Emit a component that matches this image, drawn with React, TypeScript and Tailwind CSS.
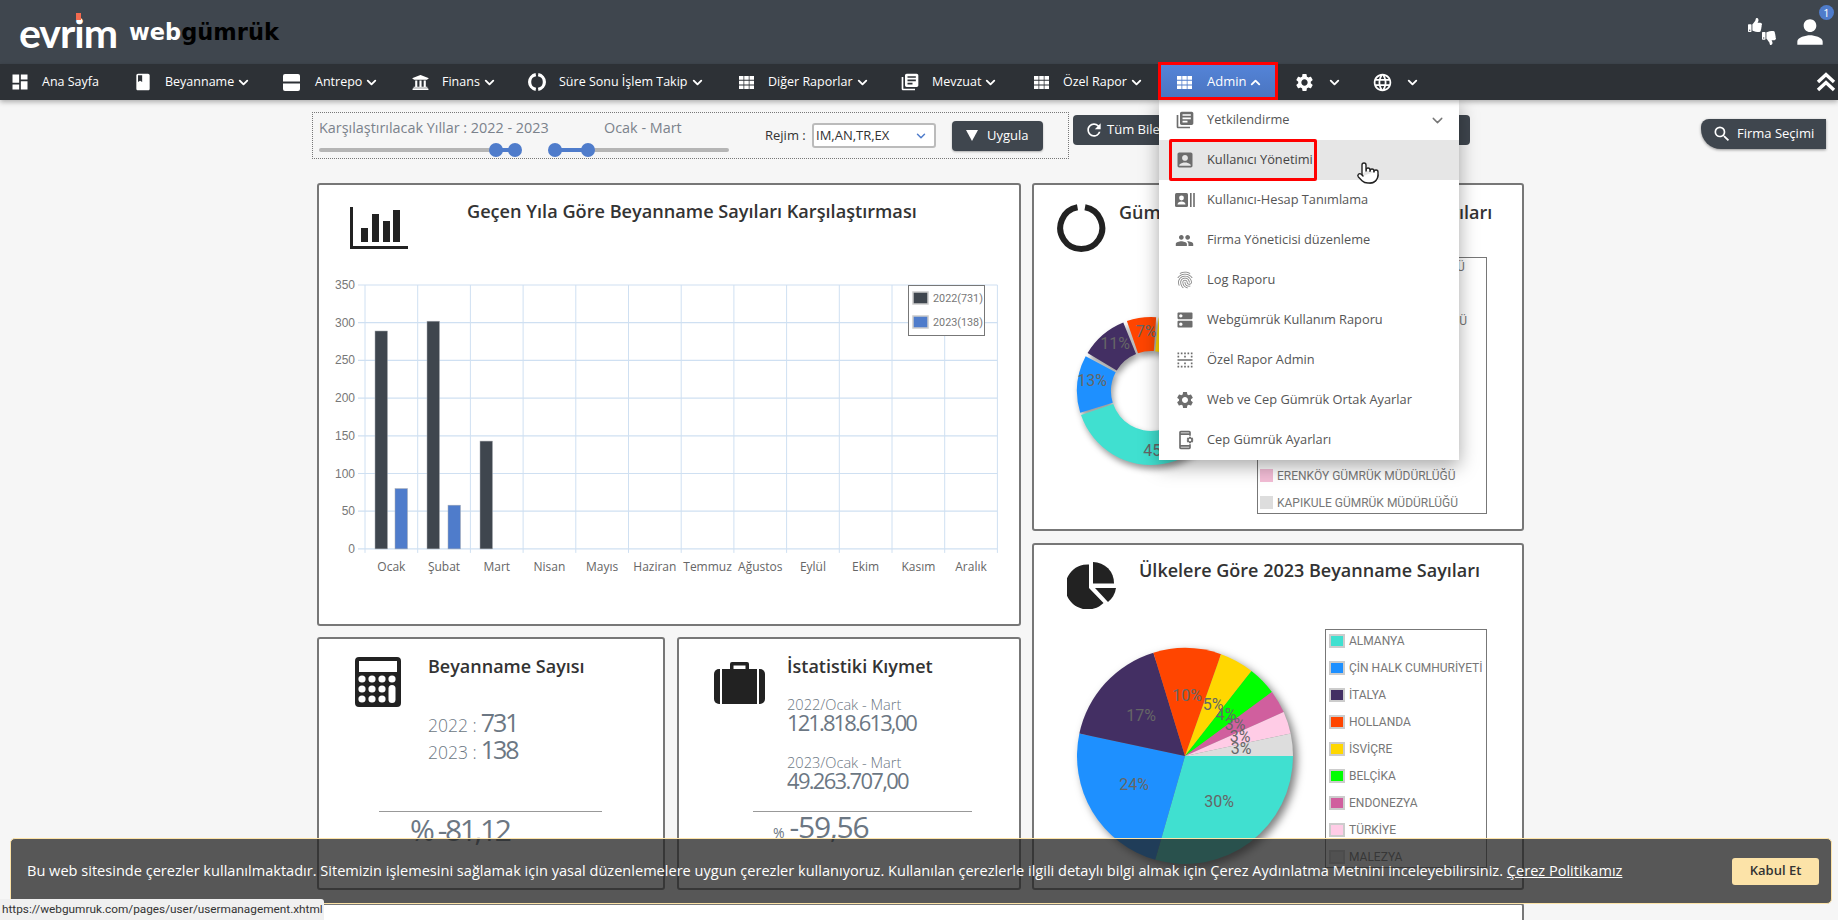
import { ChevronDown, ChevronUp, Pointer } from 'lucide-react'
import { FaThumbsDown, FaThumbsUp, FaUniversity } from 'react-icons/fa'
import {
  MdAccountBox,
  MdBook,
  MdBorderHorizontal,
  MdDashboard,
  MdDns,
  MdFingerprint,
  MdLanguage,
  MdLibraryBooks,
  MdOutlineAppSettingsAlt,
  MdPeople,
  MdPerson,
  MdRefresh,
  MdSearch,
  MdSettings,
} from 'react-icons/md'

function slicePath(cx: number, cy: number, r: number, r0: number, a0: number, a1: number) {
  const p = (rad: number, deg: number) => {
    const t = (deg * Math.PI) / 180
    return `${(cx + rad * Math.cos(t)).toFixed(2)} ${(cy + rad * Math.sin(t)).toFixed(2)}`
  }
  const large = a1 - a0 > 180 ? 1 : 0
  if (r0 === 0) return `M${cx} ${cy}L${p(r, a0)}A${r} ${r} 0 ${large} 1 ${p(r, a1)}Z`
  return `M${p(r, a0)}A${r} ${r} 0 ${large} 1 ${p(r, a1)}L${p(r0, a1)}A${r0} ${r0} 0 ${large} 0 ${p(r0, a0)}Z`
}

function Chev() {
  return <ChevronDown size={15} strokeWidth={3} className="ml-[2px] shrink-0" />
}

function AntrepoIcon() {
  return (
    <svg width="17" height="17" viewBox="0 0 17 17" fill="white">
      <path d="M2 0h13a2 2 0 0 1 2 2v5.5H0V2a2 2 0 0 1 2-2z" />
      <path d="M0 9.5h17V15a2 2 0 0 1-2 2H2a2 2 0 0 1-2-2z" />
    </svg>
  )
}

function SureIcon() {
  return (
    <svg width="18" height="18" viewBox="0 0 18 18" fill="none" stroke="white" strokeWidth="3.2">
      <path d="M7.8 1.7A7.4 7.4 0 0 0 7.8 16.3" />
      <path d="M10.2 1.7A7.4 7.4 0 0 1 10.2 16.3" />
    </svg>
  )
}

function GridIcon() {
  return (
    <svg width="15" height="13" viewBox="0 0 15 13" fill="white">
      {[0, 4.75, 9.5].map((y) =>
        [0, 5.25, 10.5].map((x) => <rect key={`${x}-${y}`} x={x} y={y} width="4.5" height="3.75" />),
      )}
    </svg>
  )
}

const navItems = [
  { label: 'Ana Sayfa', icon: <MdDashboard size={20} className="-ml-[2px]" />, w: 'w-[124px]', box: 'w-[30px]', chev: false },
  { label: 'Beyanname', icon: <MdBook size={20} className="-ml-[3px]" />, w: 'w-[147px]', box: 'w-[29px]', chev: true },
  { label: 'Antrepo', icon: <AntrepoIcon />, w: 'w-[129px]', box: 'w-[32px]', chev: true },
  { label: 'Finans', icon: <FaUniversity size={17} />, w: 'w-[116px]', box: 'w-[30px]', chev: true },
  { label: 'Süre Sonu İşlem Takip', icon: <SureIcon />, w: 'w-[211px]', box: 'w-[31px]', chev: true },
  { label: 'Diğer Raporlar', icon: <GridIcon />, w: 'w-[162px]', box: 'w-[29px]', chev: true },
  { label: 'Mevzuat', icon: <MdLibraryBooks size={20} className="-ml-[1px]" />, w: 'w-[133px]', box: 'w-[31px]', chev: true },
  { label: 'Özel Rapor', icon: <GridIcon />, w: 'w-[124px]', box: 'w-[29px]', chev: true },
]

function AccountBarsIcon() {
  return (
    <svg width="20" height="14" viewBox="0 0 20 14" fill="#6d6d6d">
      <rect x="0" y="0" width="13" height="14" rx="1.5" />
      <circle cx="6.5" cy="5" r="2.4" fill="white" />
      <path d="M2.5 11.5c0-2 2-3 4-3s4 1 4 3z" fill="white" />
      <rect x="15" y="0" width="1.6" height="14" />
      <rect x="18.2" y="0" width="1.6" height="14" />
    </svg>
  )
}

const menuItems = [
  { label: 'Yetkilendirme', icon: <MdLibraryBooks size={20} color="#6d6d6d" />, sub: true },
  { label: 'Kullanıcı Yönetimi', icon: <MdAccountBox size={20} color="#6d6d6d" />, active: true },
  { label: 'Kullanıcı-Hesap Tanımlama', icon: <AccountBarsIcon /> },
  { label: 'Firma Yöneticisi düzenleme', icon: <MdPeople size={19} color="#6d6d6d" /> },
  { label: 'Log Raporu', icon: <MdFingerprint size={20} color="#7d7d7d" /> },
  { label: 'Webgümrük Kullanım Raporu', icon: <MdDns size={20} color="#6d6d6d" /> },
  { label: 'Özel Rapor Admin', icon: <MdBorderHorizontal size={20} color="#6d6d6d" /> },
  { label: 'Web ve Cep Gümrük Ortak Ayarlar', icon: <MdSettings size={20} color="#6d6d6d" /> },
  { label: 'Cep Gümrük Ayarları', icon: <MdOutlineAppSettingsAlt size={20} color="#6d6d6d" /> },
]

function RangeSlider({ w, from, to }: { w: string; from: number; to: number }) {
  return (
    <div className={`relative h-[4px] rounded-full bg-[#b5b5b5] ${w}`}>
      <div className="absolute top-0 h-[4px] bg-[#4f7ccb]" style={{ left: from, width: to - from }} />
      <div className="absolute -top-[5px] h-[14px] w-[14px] -translate-x-1/2 rounded-full bg-[#4f7ccb]" style={{ left: from }} />
      <div className="absolute -top-[5px] h-[14px] w-[14px] -translate-x-1/2 rounded-full bg-[#4f7ccb]" style={{ left: to }} />
    </div>
  )
}

function FilterRow() {
  return (
    <div className="flex items-start pl-[312px] pt-[12px]">
      <div className="flex h-[47px] w-[757px] items-center border border-dotted border-[#777] pl-[6px]">
        <div className="w-[446px]">
          <div className="-mt-[1px] flex text-[14.4px] leading-[20px] text-[#7b828c]">
            <span className="w-[285px]">Karşılaştırılacak Yıllar : 2022 - 2023</span>
            <span>Ocak - Mart</span>
          </div>
          <div className="mt-[10px] flex">
            <RangeSlider w="w-[196px]" from={177} to={196} />
            <div className="ml-[40px]">
              <RangeSlider w="w-[174px]" from={0} to={33} />
            </div>
          </div>
        </div>
        <span className="w-[47px] text-[13px] text-[#333]">Rejim :</span>
        <div className="flex h-[25px] w-[124px] items-center justify-between rounded-[3px] border-2 border-[#bbb] bg-white pl-[2px] pr-[6px] text-[13px] text-[#333]">
          IM,AN,TR,EX
          <ChevronDown size={14} strokeWidth={2.5} color="#4f7ccb" />
        </div>
        <button className="ml-[16px] flex h-[30px] w-[91px] items-center rounded-[4px] bg-[#3f464e] pl-[14px] text-[13px] text-white shadow-[0_1px_2px_rgba(0,0,0,0.3)]">
          <svg width="12" height="11" viewBox="0 0 12 11" fill="white">
            <path d="M0 0h12L6 11z" />
          </svg>
          <span className="ml-[9px]">Uygula</span>
        </button>
      </div>
      <button className="ml-[4px] mt-[3px] flex h-[30px] w-[397px] items-center rounded-[4px] bg-[#3f464e] pl-[11px] text-[13px] text-white">
        <MdRefresh size={20} />
        <span className="ml-[3px]">Tüm Bileşenleri Yenile</span>
      </button>
    </div>
  )
}

function BarIcon() {
  return (
    <svg width="58" height="42" viewBox="0 0 58 42" fill="#222">
      <rect x="0" y="0" width="3" height="42" />
      <rect x="0" y="39" width="58" height="3" />
      <rect x="11" y="21" width="7" height="14" />
      <rect x="22" y="7" width="7" height="28" />
      <rect x="33" y="14" width="7" height="21" />
      <rect x="43" y="3" width="7" height="32" />
    </svg>
  )
}

const months = ['Ocak', 'Şubat', 'Mart', 'Nisan', 'Mayıs', 'Haziran', 'Temmuz', 'Ağustos', 'Eylül', 'Ekim', 'Kasım', 'Aralık']

function BarChart() {
  const left = 46
  const top = 10
  const stepX = 52.7
  const stepY = 37.7
  const bottom = top + stepY * 7
  const y = (v: number) => bottom - v * (stepY / 50)
  const bars = [
    { x: 56, v: 289, c: '#3f464e' },
    { x: 76, v: 80, c: '#4f7ccb' },
    { x: 108, v: 302, c: '#3f464e' },
    { x: 129, v: 58, c: '#4f7ccb' },
    { x: 161, v: 143, c: '#3f464e' },
  ]
  return (
    <svg width="699" height="320" className="block">
      {[0, 1, 2, 3, 4, 5, 6, 7].map((i) => (
        <g key={i}>
          <line x1={left - 7} x2={left + stepX * 12} y1={top + stepY * i} y2={top + stepY * i} stroke="#cfe0f2" strokeWidth="1.2" />
          <text x="36" y={top + stepY * i + 4} textAnchor="end" fontSize="12" fill="#777" fontFamily="Liberation Sans">
            {350 - i * 50}
          </text>
        </g>
      ))}
      {Array.from({ length: 13 }).map((_, i) => (
        <line key={i} x1={left + stepX * i} x2={left + stepX * i} y1={top} y2={bottom + 4} stroke="#cfe0f2" strokeWidth="1" />
      ))}
      {bars.map((b) => (
        <rect key={b.x} x={b.x} y={y(b.v)} width="12.5" height={bottom - y(b.v)} fill={b.c} stroke="#a8acb2" strokeWidth="0.5" />
      ))}
      {months.map((m, i) => (
        <text key={m} x={left + stepX * (i + 0.5)} y={296} textAnchor="middle" fontSize="12" fill="#666">
          {m}
        </text>
      ))}
      <rect x="589.5" y="10.5" width="76" height="50" fill="white" stroke="#777" />
      <rect x="594" y="17" width="15" height="12" fill="#3f464e" stroke="#ccc" strokeWidth="1.5" />
      <rect x="594" y="41" width="15" height="12" fill="#4f7ccb" stroke="#ccc" strokeWidth="1.5" />
      <text x="614" y="27" fontSize="10.8" fill="#777" fontFamily="Roboto">2022(731)</text>
      <text x="614" y="51" fontSize="10.8" fill="#777" fontFamily="Roboto">2023(138)</text>
    </svg>
  )
}

const donutSlices = [
  { a0: 1, a1: 161, c: '#40e0d0' },
  { a0: 163, a1: 208, c: '#1e90ff' },
  { a0: 211, a1: 248, c: '#432f63' },
  { a0: 251, a1: 274, c: '#ff4500' },
  { a0: 276, a1: 320, c: '#ffd700' },
  { a0: 322, a1: 359, c: '#00ff00' },
]

function DonutChart() {
  return (
    <svg width="223" height="250" className="block shrink-0">
      <g className="drop-shadow-[2px_4px_3px_rgba(0,0,0,0.4)]">
        {donutSlices.map((s) => (
          <path key={s.c} d={slicePath(117, 134, 74, 40, s.a0, s.a1)} fill={s.c} />
        ))}
      </g>
      <g fontSize="16" fill="#666" textAnchor="middle" fontFamily="Roboto">
        <text x="58" y="129">13%</text>
        <text x="81" y="92">11%</text>
        <text x="112" y="80">7%</text>
        <text x="124" y="199">45%</text>
      </g>
    </svg>
  )
}

const pieSlices = [
  { a0: 0, a1: 106, c: '#40e0d0' },
  { a0: 106, a1: 192, c: '#1e90ff' },
  { a0: 192, a1: 253, c: '#432f63' },
  { a0: 253, a1: 289.5, c: '#ff4500' },
  { a0: 289.5, a1: 308, c: '#ffd700' },
  { a0: 308, a1: 323.6, c: '#00ff00' },
  { a0: 323.6, a1: 336, c: '#d05f9e' },
  { a0: 336, a1: 348, c: '#ffcce6' },
  { a0: 348, a1: 360, c: '#dddddd' },
]

const pieLabels = [
  { t: '30%', x: 185, y: 178 },
  { t: '24%', x: 100, y: 161 },
  { t: '17%', x: 107, y: 92 },
  { t: '10%', x: 153, y: 72 },
  { t: '5%', x: 179, y: 81 },
  { t: '4%', x: 192, y: 91 },
  { t: '3%', x: 201, y: 101 },
  { t: '3%', x: 206, y: 113 },
  { t: '3%', x: 207, y: 125 },
]

function PieChart() {
  return (
    <svg width="291" height="250" className="block shrink-0">
      <g className="drop-shadow-[4px_4px_4px_rgba(0,0,0,0.5)]">
        {pieSlices.map((s) => (
          <path key={s.c} d={slicePath(151, 127, 108, 0, s.a0, s.a1)} fill={s.c} />
        ))}
      </g>
      <g fontSize="16" fill="#666" textAnchor="middle" fontFamily="Roboto">
        {pieLabels.map((l, i) => (
          <text key={i} x={l.x} y={l.y}>{l.t}</text>
        ))}
      </g>
    </svg>
  )
}

const customsTop = [
  { n: 'MURATBEY GÜMRÜK MÜDÜRLÜĞÜ', c: '#40e0d0' },
  { n: 'AMBARLI GÜMRÜK MÜDÜRLÜĞÜ', c: '#1e90ff' },
  { n: 'ADAPAZARI GÜMRÜK MÜDÜRLÜĞÜ', c: '#432f63' },
]

function GumrukLegend() {
  return (
    <div className="flex h-[257px] w-[230px] flex-col justify-between border border-[#777] pl-[2px] text-[12px] text-[#777] [font-family:Roboto]">
      <div className="-mt-[5px]">
        {customsTop.map((r) => (
          <div key={r.n} className="flex h-[27px] items-center">
            <span className="mr-[4px] h-[13px] w-[13px]" style={{ background: r.c }} />
            <span className="whitespace-nowrap">{r.n}</span>
          </div>
        ))}
      </div>
      <div className="-mb-[3px]">
        <div className="flex h-[27px] items-center">
          <span className="mr-[4px] h-[13px] w-[13px] bg-[#f3bdd6]" />
          ERENKÖY GÜMRÜK MÜDÜRLÜĞÜ
        </div>
        <div className="flex h-[27px] items-center">
          <span className="mr-[4px] h-[13px] w-[13px] bg-[#dddddd]" />
          KAPIKULE GÜMRÜK MÜDÜRLÜĞÜ
        </div>
      </div>
    </div>
  )
}

const countries = [
  { n: 'ALMANYA', c: '#40e0d0' },
  { n: 'ÇİN HALK CUMHURİYETİ', c: '#1e90ff' },
  { n: 'İTALYA', c: '#432f63' },
  { n: 'HOLLANDA', c: '#ff4500' },
  { n: 'İSVİÇRE', c: '#ffd700' },
  { n: 'BELÇİKA', c: '#00ff00' },
  { n: 'ENDONEZYA', c: '#d05f9e' },
  { n: 'TÜRKİYE', c: '#ffcce6' },
  { n: 'MALEZYA', c: '#dddddd' },
]

function PieIcon() {
  return (
    <svg width="49" height="47" viewBox="0 0 49 47" fill="#222">
      <path d="M22 2.5V26L36.5 41A22.5 22.5 0 1 1 22 2.5Z" />
      <path d="M26 0A21 21 0 0 1 47 21.5H26Z" />
      <path d="M28 26H49A22 22 0 0 1 41 40Z" />
    </svg>
  )
}

function RingIcon() {
  return (
    <svg width="49" height="48" viewBox="0 0 49 48" fill="none" stroke="#222" strokeWidth="6">
      <path d="M28 3.3A21 21 0 1 1 20.5 3.3" />
    </svg>
  )
}

function CalcIcon() {
  return (
    <svg width="46" height="50" viewBox="0 0 46 50" fill="#222">
      <path fillRule="evenodd" d="M4 0h38a4 4 0 0 1 4 4v42a4 4 0 0 1-4 4H4a4 4 0 0 1-4-4V4a4 4 0 0 1 4-4zM4 4v11h38V4z" />
      {[22, 32, 42].map((cy) =>
        [7, 17, 27].map((cx) => <circle key={`${cx}-${cy}`} cx={cx} cy={cy} r="3.6" fill="white" />),
      )}
      <circle cx="37" cy="22" r="3.6" fill="white" />
      <rect x="33.5" y="28" width="7" height="18" rx="3.5" fill="white" />
    </svg>
  )
}

function SuitcaseIcon() {
  return (
    <svg width="51" height="43" viewBox="0 0 51 43" fill="#222">
      <path d="M16 9V3a2 2 0 0 1 2-2h15a2 2 0 0 1 2 2v6h-3.5V4.5h-12V9z" />
      <path d="M6 8v35H5a5 5 0 0 1-5-5V13a5 5 0 0 1 5-5z" />
      <rect x="8" y="8" width="35" height="35" />
      <path d="M45 8h1a5 5 0 0 1 5 5v25a5 5 0 0 1-5 5h-1z" />
    </svg>
  )
}

function Card({ className, children }: { className: string; children: React.ReactNode }) {
  return <div className={`rounded-[3px] border-2 border-[#777] bg-white ${className}`}>{children}</div>
}

export default function App() {
  return (
    <div className="relative h-[920px] w-[1838px] overflow-hidden bg-[#f6f6f6] font-['Open_Sans',sans-serif]">
      {/* header */}
      <div className="flex h-[64px] items-center justify-between bg-[#3f464e] pl-[19px] pr-[2px]">
        <div className="flex items-center">
          <div className="relative text-[41px] font-bold leading-none tracking-[-1px] text-white [font-family:Lato]">
            evrim
            <span className="absolute left-[57px] top-[1px] h-[7px] w-[5px] bg-[#f26a4f]" />
          </div>
          <div className="ml-[12px] text-[22.5px] font-bold leading-none [font-family:'DejaVu_Sans']">
            <span className="text-white">web</span>
            <span className="text-black">gümrük</span>
          </div>
        </div>
        <div className="flex items-center text-white">
          <div className="flex h-[28px] w-[28px] flex-col">
            <FaThumbsUp size={14} />
            <FaThumbsDown size={14} className="-mt-[1px] ml-[14px]" />
          </div>
          <div className="relative ml-[15px] mr-[7px]">
            <MdPerson size={38} />
            <span className="absolute -right-[5px] -top-[8px] flex h-[15px] w-[15px] items-center justify-center rounded-full bg-[#4f7ccb] text-[11px] leading-none text-white">
              1
            </span>
          </div>
        </div>
      </div>

      {/* nav */}
      <div className="relative z-20 flex h-[36px] items-center bg-[#2d3136] pl-[12px] text-[12.5px] text-white shadow-[0_2px_5px_rgba(0,0,0,0.3)]">
        {navItems.map((item) => (
          <div key={item.label} className={`flex h-full items-center ${item.w}`}>
            <span className={`flex shrink-0 items-center ${item.box}`}>{item.icon}</span>
            <span className="whitespace-nowrap">{item.label}</span>
            {item.chev && <Chev />}
          </div>
        ))}
        <div className="relative flex h-full w-[120px] items-center bg-gradient-to-b from-[#5484d8] to-[#4a74bf] pl-[19px]">
          <GridIcon />
          <span className="ml-[15px] text-[13px]">Admin</span>
          <ChevronUp size={15} strokeWidth={3} className="ml-[2px]" />
          <div className="absolute -top-[2px] bottom-0 left-0 right-0 border-[3px] border-[#f00]" />
        </div>
        <MdSettings size={21} className="ml-[16px]" />
        <ChevronDown size={15} strokeWidth={3} className="ml-[12px]" />
        <MdLanguage size={21} className="ml-[30px]" />
        <ChevronDown size={15} strokeWidth={3} className="ml-[12px]" />
        <svg width="20" height="20" viewBox="0 0 20 20" fill="none" stroke="white" strokeWidth="3.4" className="ml-auto mr-[2px]">
          <path d="M2 10l8-7.5 8 7.5" />
          <path d="M2 18l8-7.5 8 7.5" />
        </svg>
      </div>

      <FilterRow />

      {/* cards */}
      <div className="flex gap-[11px] pl-[317px] pt-[24px]">
        <div className="w-[704px]">
          <Card className="h-[443px]">
            <div className="flex h-[90px] pl-[31px] pt-[14px]">
              <div className="mt-[8px]">
                <BarIcon />
              </div>
              <h2 className="ml-[59px] text-[18.15px] font-semibold leading-[24px] text-[#333]">
                Geçen Yıla Göre Beyanname Sayıları Karşılaştırması
              </h2>
            </div>
            <BarChart />
          </Card>
          <div className="mt-[11px] flex gap-[12px]">
            <Card className="h-[253px] w-[348px]">
              <div className="flex h-[172px]">
                <div className="w-[109px] pl-[36px] pt-[18px]">
                  <CalcIcon />
                </div>
                <div className="pt-[15px] text-[#6c7783]">
                  <h3 className="text-[18px] font-semibold leading-[24px] text-[#333]">Beyanname Sayısı</h3>
                  <div className="mt-[32px] flex items-baseline leading-[25px]">
                    <span className="text-[17.5px] font-light">2022 :</span>
                    <span className="ml-[4px] text-[25px] tracking-[-2px]">731</span>
                  </div>
                  <div className="-mt-[1px] flex items-baseline leading-[25px]">
                    <span className="text-[17.5px] font-light">2023 :</span>
                    <span className="ml-[4px] text-[25px] tracking-[-2px]">138</span>
                  </div>
                </div>
              </div>
              <div className="ml-[60px] w-[223px] border-t border-[#999]" />
              <div className="ml-[91px] text-[30px] leading-[36px] tracking-[-2.4px] text-[#6c7783]">% -81,12</div>
            </Card>
            <Card className="h-[253px] w-[344px]">
              <div className="flex h-[172px]">
                <div className="w-[108px] pl-[35px] pt-[22px]">
                  <SuitcaseIcon />
                </div>
                <div className="pt-[15px] text-[#6c7783]">
                  <h3 className="text-[18px] font-semibold leading-[24px] text-[#333]">İstatistiki Kıymet</h3>
                  <div className="mt-[17px] text-[14.6px] font-light leading-[18px]">2022/Ocak - Mart</div>
                  <div className="-mt-[1px] text-[22px] leading-[20px] tracking-[-1.9px]">121.818.613,00</div>
                  <div className="mt-[21px] text-[14.6px] font-light leading-[18px]">2023/Ocak - Mart</div>
                  <div className="-mt-[1px] text-[22px] leading-[20px] tracking-[-1.7px]">49.263.707,00</div>
                </div>
              </div>
              <div className="ml-[74px] w-[219px] border-t border-[#999]" />
              <div className="-mt-[2px] ml-[94px] flex items-baseline leading-[34px] text-[#6c7783]">
                <span className="text-[14px]">%</span>
                <span className="ml-[5px] text-[30px] tracking-[-1.2px]">-59,56</span>
              </div>
            </Card>
          </div>
        </div>

        <div className="w-[492px]">
          <Card className="h-[348px]">
            <div className="flex h-[72px] pl-[23px] pt-[15px]">
              <div className="mt-[4px]">
                <RingIcon />
              </div>
              <h2 className="ml-[13px] text-[18px] font-semibold leading-[24px] text-[#333]">
                Gümrüklere Göre 2023 Beyanname Sayıları
              </h2>
            </div>
            <div className="flex">
              <DonutChart />
              <GumrukLegend />
            </div>
          </Card>
          <Card className="mt-[12px] h-[347px]">
            <div className="flex h-[84px] pl-[33px] pt-[13px]">
              <div className="mt-[4px]">
                <PieIcon />
              </div>
              <h2 className="ml-[23px] text-[18px] font-semibold leading-[24px] text-[#333]">
                Ülkelere Göre 2023 Beyanname Sayıları
              </h2>
            </div>
            <div className="flex">
              <PieChart />
              <div className="h-[239px] w-[162px] border border-[#777] pl-[3px] text-[12px] text-[#777] [font-family:Roboto]">
                <div className="-mt-[3px]">
                  {countries.map((c) => (
                    <div key={c.n} className="flex h-[27px] items-center whitespace-nowrap">
                      <span className="mr-[4px] h-[14px] w-[16px] border-2 border-[#ccc]" style={{ background: c.c }} />
                      {c.n}
                    </div>
                  ))}
                </div>
              </div>
            </div>
          </Card>
        </div>
      </div>

      <div className="ml-[317px] mt-[13px] h-[40px] w-[1207px] rounded-[3px] border-2 border-[#777] bg-white" />

      {/* firma secimi */}
      <div className="absolute right-[12px] top-[119px] flex h-[30px] w-[125px] items-center rounded-bl-[20px] rounded-tl-[8px] bg-[#3f464e] pl-[11px] text-[13px] text-white shadow-[0_1px_3px_rgba(0,0,0,0.4)]">
        <MdSearch size={20} />
        <span className="ml-[5px]">Firma Seçimi</span>
      </div>

      {/* admin dropdown */}
      <div className="absolute left-[1159px] top-[100px] z-10 w-[300px] bg-white text-[12.8px] text-[#555] shadow-[0_6px_18px_rgba(0,0,0,0.35)]">
        {menuItems.map((m) => (
          <div key={m.label} className={`relative flex h-[40px] items-center pl-[16px] ${m.active ? 'bg-[#e6e6e6]' : ''}`}>
            <span className="flex w-[32px] shrink-0 items-center">{m.icon}</span>
            <span className={m.active ? 'text-[#444]' : ''}>{m.label}</span>
            {m.sub && <ChevronDown size={17} strokeWidth={2} color="#777" className="ml-auto mr-[13px]" />}
            {m.active && <div className="absolute -bottom-[1px] -top-[1px] left-[10px] w-[148px] rounded-[2px] border-[3px] border-[#f00]" />}
          </div>
        ))}
      </div>

      {/* mouse cursor */}
      <Pointer size={24} fill="white" stroke="#222" strokeWidth={1.4} className="absolute left-[1356px] top-[161px] z-30" />

      {/* cookie banner */}
      <div className="absolute left-[10px] top-[838px] z-30 flex h-[66px] w-[1822px] items-center justify-between rounded-[5px] border border-[#fde3a7] bg-[#222]/75 pl-[16px] pr-[12px] text-[14.57px] text-white">
        <p>
          Bu web sitesinde çerezler kullanılmaktadır. Sitemizin işlemesini sağlamak için yasal düzenlemelere uygun çerezler kullanıyoruz. Kullanılan çerezlerle ilgili detaylı bilgi almak için Çerez Aydınlatma Metnini inceleyebilirsiniz.{' '}
          <span className="underline">Çerez Politikamız</span>
        </p>
        <button className="h-[27px] w-[87px] rounded-[3px] bg-[#fce3a8] text-[13px] font-semibold text-[#333]">Kabul Et</button>
      </div>

      {/* browser status bar */}
      <div className="absolute bottom-0 left-0 z-40 flex h-[21px] w-[324px] items-center rounded-tr-[3px] bg-[#f0f0f0] pl-[2px] text-[11.8px] text-[#333] [font-family:Roboto]">
        https://webgumruk.com/pages/user/usermanagement.xhtml
      </div>
    </div>
  )
}
